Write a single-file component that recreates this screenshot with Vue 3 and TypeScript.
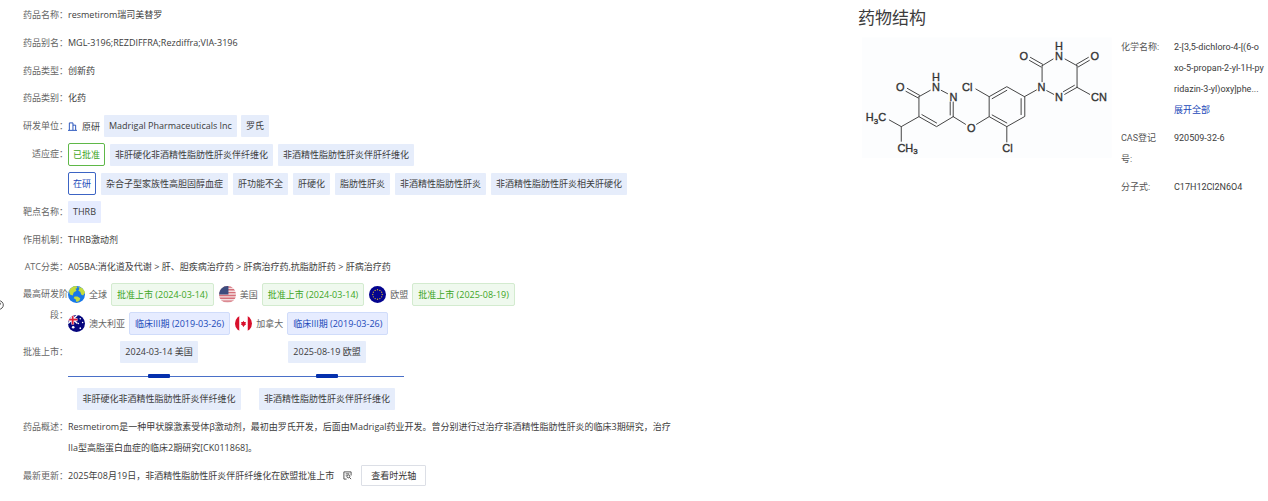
<script setup lang="ts">
interface Stage {
  flag: string
  region: string
  status: string
  approved: boolean
}

const stageLines: Stage[][] = [
  [
    { flag: 'globe', region: '全球', status: '批准上市 (2024-03-14)', approved: true },
    { flag: 'us', region: '美国', status: '批准上市 (2024-03-14)', approved: true },
    { flag: 'eu', region: '欧盟', status: '批准上市 (2025-08-19)', approved: true },
  ],
  [
    { flag: 'au', region: '澳大利亚', status: '临床III期 (2019-03-26)', approved: false },
    { flag: 'ca', region: '加拿大', status: '临床III期 (2019-03-26)', approved: false },
  ],
]

const approvedFor: string[] = ['非肝硬化非酒精性脂肪性肝炎伴纤维化', '非酒精性脂肪性肝炎伴肝纤维化']
const inTrial: string[] = ['杂合子型家族性高胆固醇血症', '肝功能不全', '肝硬化', '脂肪性肝炎', '非酒精性脂肪性肝炎', '非酒精性脂肪性肝炎相关肝硬化']

const approvals = [
  { when: '2024-03-14 美国', what: '非肝硬化非酒精性脂肪性肝炎伴纤维化' },
  { when: '2025-08-19 欧盟', what: '非酒精性脂肪性肝炎伴肝纤维化' },
]

const stars = Array.from({ length: 12 }, (_, i) => ({
  x: 9 + 5 * Math.cos((i * Math.PI) / 6),
  y: 9 + 5 * Math.sin((i * Math.PI) / 6),
}))
</script>

<template>
  <main class="page">
    <dl class="info">
      <div class="row loose"><dt>药品名称：</dt><dd>resmetirom瑞司美替罗</dd></div>
      <div class="row loose"><dt>药品别名：</dt><dd>MGL-3196;REZDIFFRA;Rezdiffra;VIA-3196</dd></div>
      <div class="row"><dt>药品类型：</dt><dd>创新药</dd></div>
      <div class="row loose"><dt>药品类别：</dt><dd>化药</dd></div>
      <div class="row">
        <dt>研发单位：</dt>
        <dd class="tags">
          <span class="origin">
            <svg class="building" viewBox="0 0 10 10" aria-hidden="true">
              <path d="M1.500 9V1h4v8M5.500 3.500h3V9M0 9.300h10" />
            </svg>
            原研
          </span>
          <span class="tag">Madrigal Pharmaceuticals Inc</span>
          <span class="tag">罗氏</span>
        </dd>
      </div>
      <div class="row">
        <dt>适应症：</dt>
        <dd class="lines">
          <div class="tags wide">
            <span class="tag framed green">已批准</span>
            <span v-for="name in approvedFor" :key="name" class="tag">{{ name }}</span>
          </div>
          <div class="tags wide">
            <span class="tag framed blue">在研</span>
            <span v-for="name in inTrial" :key="name" class="tag">{{ name }}</span>
          </div>
        </dd>
      </div>
      <div class="row"><dt>靶点名称：</dt><dd class="tags"><span class="tag target">THRB</span></dd></div>
      <div class="row"><dt>作用机制：</dt><dd>THRB激动剂</dd></div>
      <div class="row"><dt>ATC分类：</dt><dd>A05BA:消化道及代谢 &gt; 肝、胆疾病治疗药 &gt; 肝病治疗药,抗脂肪肝药 &gt; 肝病治疗药</dd></div>
      <div class="row stage-row">
        <svg class="help" viewBox="0 0 10 10" aria-hidden="true">
          <circle cx="5" cy="5" r="4.300" />
          <path d="M3.500 3.900c.2-2 3.200-1.800 3 0C6.400 5 5 4.900 5 6.200M5 7v.8" />
        </svg>
        <dt>最高研发阶段：</dt>
        <dd class="lines">
          <div v-for="(line, n) in stageLines" :key="n" class="stages">
            <span v-for="s in line" :key="s.region" class="stage">
              <svg class="flag" viewBox="0 0 18 18" aria-hidden="true">
                <g v-if="s.flag === 'globe'">
                  <circle cx="9" cy="9" r="9" fill="#1877e8" />
                  <path d="M1 5C3 1.500 6 0 9 0l1 2-2 1 1 2-3 2-1 3-3-1zM11 1c4 0 6 3 7 6l-2 3-2-1-1-3-2-1 1-2zM7 11l3 0 3 2-1 3-3 1-1-3-2-1z" fill="#c4dc3c" />
                </g>
                <g v-else-if="s.flag === 'us'" clip-path="url(#disc)">
                  <rect width="18" height="18" fill="#f3dfe1" />
                  <path d="M0 1h18M0 4h18M0 7h18M0 10h18M0 13h18M0 16h18" stroke="#d5707a" stroke-width="1.500" />
                  <rect width="10" height="9" fill="#3d4c7e" />
                </g>
                <g v-else-if="s.flag === 'eu'">
                  <circle cx="9" cy="9" r="9" fill="#04048f" />
                  <circle v-for="(p, i) in stars" :key="i" :cx="p.x" :cy="p.y" r=".7" fill="#d8b52c" />
                </g>
                <g v-else-if="s.flag === 'au'" clip-path="url(#disc)">
                  <rect width="18" height="18" fill="#06067e" />
                  <path d="M0 0l10 9M10 0L0 9" stroke="#fff" stroke-width="1.500" />
                  <path d="M5 0v10M0 5h10" stroke="#fff" stroke-width="3" />
                  <path d="M5 0v10M0 5h10" stroke="#e02038" stroke-width="1.800" />
                  <g fill="#fff"><circle cx="5.500" cy="13" r="1.400" /><circle cx="13" cy="4" r=".8" /><circle cx="15.500" cy="8" r=".8" /><circle cx="11" cy="9" r=".8" /><circle cx="13" cy="14" r=".9" /></g>
                </g>
                <g v-else clip-path="url(#disc)">
                  <rect width="18" height="18" fill="#fff" />
                  <path d="M0 0h4.500v18H0zM13.500 0H18v18h-4.500z" fill="#d8102c" />
                  <path d="M9 6l.8 1.500 1.700-.2-.4 1.900.7.600-2 1.600-.4 1h-.8l-.4-1-2-1.600.7-.6-.4-1.900 1.700.2z" fill="#d8102c" />
                </g>
              </svg>
              {{ s.region }}
              <span class="tag outlined" :class="s.approved ? 'passed' : 'trial'">{{ s.status }}</span>
            </span>
          </div>
        </dd>
      </div>
      <div class="row">
        <dt>批准上市：</dt>
        <dd>
          <ol class="timeline">
            <li v-for="a in approvals" :key="a.when">
              <span class="tag">{{ a.when }}</span>
              <i class="marker"></i>
              <span class="tag">{{ a.what }}</span>
            </li>
          </ol>
        </dd>
      </div>
      <div class="row loose">
        <dt>药品概述：</dt>
        <dd class="summary">Resmetirom是一种甲状腺激素受体β激动剂，最初由罗氏开发，后面由Madrigal药业开发。曾分别进行过治疗非酒精性脂肪性肝炎的临床3期研究，治疗<br />IIa型高脂蛋白血症的临床2期研究[CK011868]。</dd>
      </div>
      <div class="row">
        <dt>最新更新：</dt>
        <dd class="update">
          2025年08月19日，非酒精性脂肪性肝炎伴肝纤维化在欧盟批准上市
          <svg class="source" viewBox="0 0 10 10" aria-hidden="true">
            <path d="M4 9H1V1h8v4M3 3.200h4M3 5.200h1" /><circle cx="6" cy="6" r="1.600" /><path d="M7.200 7.200L9 9" />
          </svg>
          <button type="button">查看时光轴</button>
        </dd>
      </div>
    </dl>

    <section class="structure">
      <h2>药物结构</h2>
      <div class="body">
        <svg class="molecule" viewBox="30 105 760 375" role="img" aria-label="resmetirom">
          <rect x="36" y="112" width="750" height="362" fill="#fcfdfe" />
          <g class="bonds">
            <path d="M577 197L610 177M646 177L682 197M682 197V262M682 262L645 283M612 283L591 272M577 197V245" />
            <path d="M574 201L539 181M579 193L542 172M680 193L716 172M685 201L719 181M674 256L641 275" />
            <path d="M682 262L720 283M560 270L524 290" />
            <path d="M524 290L471 260L418 290V350L471 380L524 350ZM514 296V344M471 271L427 296M427 345L471 369" />
            <path d="M418 290L378 267M471 380V426M418 350L380 373M347 373L310 350" />
            <path d="M207 290L241 271M274 271L293 281M310 306V350M301 306V345M310 350L260 380L207 350V290M260 369L216 344" />
            <path d="M205 294L168 274M209 286L172 265M207 350L154 380L118 360M154 380V424" />
          </g>
          <g class="atoms">
            <text x="628" y="151">H</text><text x="628" y="180">N</text>
            <text x="522" y="180">O</text><text x="735" y="180">O</text>
            <text x="575" y="273">N</text><text x="628" y="303">N</text><text x="748" y="304">CN</text>
            <text x="352" y="273">Cl</text><text x="473" y="456">Cl</text><text x="364" y="396">O</text>
            <text x="258" y="243">H</text><text x="258" y="272">N</text><text x="311" y="303">N</text><text x="151" y="273">O</text>
            <text x="78" y="364">H<tspan class="sub" dy="7">3</tspan><tspan dy="-7">C</tspan></text>
            <text x="173" y="456">CH<tspan class="sub" dy="7">3</tspan></text>
          </g>
        </svg>
        <dl class="facts">
          <div><dt>化学名称:</dt><dd>2-[3,5-dichloro-4-[(6-o<br />xo-5-propan-2-yl-1H-py<br />ridazin-3-yl)oxy]phe...<br /><a href="#">展开全部</a></dd></div>
          <div><dt>CAS登记号:</dt><dd>920509-32-6</dd></div>
          <div><dt>分子式:</dt><dd>C17H12Cl2N6O4</dd></div>
        </dl>
      </div>
    </section>
    <svg class="defs" aria-hidden="true"><clipPath id="disc"><circle cx="9" cy="9" r="9" /></clipPath></svg>
  </main>
</template>

<style>
body { margin: 0; background: #fff; }
</style>

<style scoped>
.page {
  display: grid;
  grid-template-columns: minmax(0, 1fr) 410px;
  font: 9px/21px "Open Sans", "Noto Sans CJK SC", sans-serif;
  color: #3c3c3c;
}
dl, dd, ol, h2 { margin: 0; padding: 0; }
.info { display: flex; flex-direction: column; gap: 6px; padding: 4px 0 0 22px; }
.row { display: flex; }
.loose { padding-bottom: 1px; }
.row > dt { flex: 0 0 46px; text-align: right; color: #666; word-break: break-all; }
.tags { display: flex; align-items: center; gap: 4px; }
.wide { gap: 5px; }
.lines { display: flex; flex-direction: column; gap: 6px; }
.tag {
  box-sizing: border-box;
  height: 22px;
  padding: 0 5px;
  line-height: 22px;
  background: #e6edfb;
  border-radius: 1px;
  white-space: nowrap;
}
.target { background: #e6ecff; }
.framed { height: 23px; padding: 0 4px; line-height: 21px; background: #fff; border: 1px solid; border-radius: 2px; }
.green { color: #3da51e; border-color: #5fb848; }
.blue { color: #1a48b8; border-color: #3c64c4; }
.origin { display: flex; align-items: center; gap: 5px; }
.building { width: 9px; height: 9px; fill: none; stroke: #1a48b8; }
.stage-row { position: relative; }
.help { position: absolute; left: -28px; top: 17px; width: 10px; height: 10px; fill: none; stroke: #555; }
.stages { display: flex; gap: 5px; }
.stage { display: flex; align-items: center; gap: 4px; color: #666; }
.flag { width: 17px; height: 17px; }
.outlined { height: 23px; line-height: 21px; border: 1px solid; border-radius: 2px; }
.passed { color: #3da51e; background: #eff9ee; border-color: #d3ebcf; }
.trial { color: #1a48b8; background: #e6ecff; border-color: #d0dcfa; }
.timeline { position: relative; display: flex; width: 336px; list-style: none; }
.timeline::before { content: ""; position: absolute; left: 0; right: 0; top: 35px; height: 1px; background: #4a70c8; }
.timeline li { position: relative; left: 7px; flex: 0 0 168px; display: flex; flex-direction: column; align-items: center; }
.marker { width: 22px; height: 4px; margin: 11px 0 10px; border-radius: 1px; background: #0530ad; }
.summary { max-width: 640px; }
.update { display: flex; align-items: center; }
.source { width: 9px; height: 9px; margin: 0 9px; fill: none; stroke: #444; }
button { height: 21px; padding: 0 9px; font: inherit; line-height: 19px; color: #333; background: #fff; border: 1px solid #dcdfe6; border-radius: 1px; }
h2 { margin-top: 7px; font-size: 17px; line-height: 22px; font-weight: 400; }
.body { display: flex; align-items: flex-start; }
.molecule { flex: 0 0 253px; height: 125px; margin: 6px 0 0 2px; }
.bonds { fill: none; stroke: #444; stroke-width: 3; stroke-linecap: round; }
.atoms { font: 33px "Liberation Sans", Arial, sans-serif; fill: #333; stroke: #333; stroke-width: 1; text-anchor: middle; }
.sub { font-size: 24px; }
.facts { display: flex; flex-direction: column; gap: 7px; margin: 8px 0 0 8px; font-family: Roboto, "Noto Sans CJK SC", sans-serif; }
.facts div { display: flex; gap: 11px; }
.facts dt { flex: 0 0 42px; color: #555; word-break: break-all; }
.facts dd { white-space: nowrap; }
a { color: #1a48b8; text-decoration: none; }
.defs { position: absolute; width: 0; height: 0; }
</style>
